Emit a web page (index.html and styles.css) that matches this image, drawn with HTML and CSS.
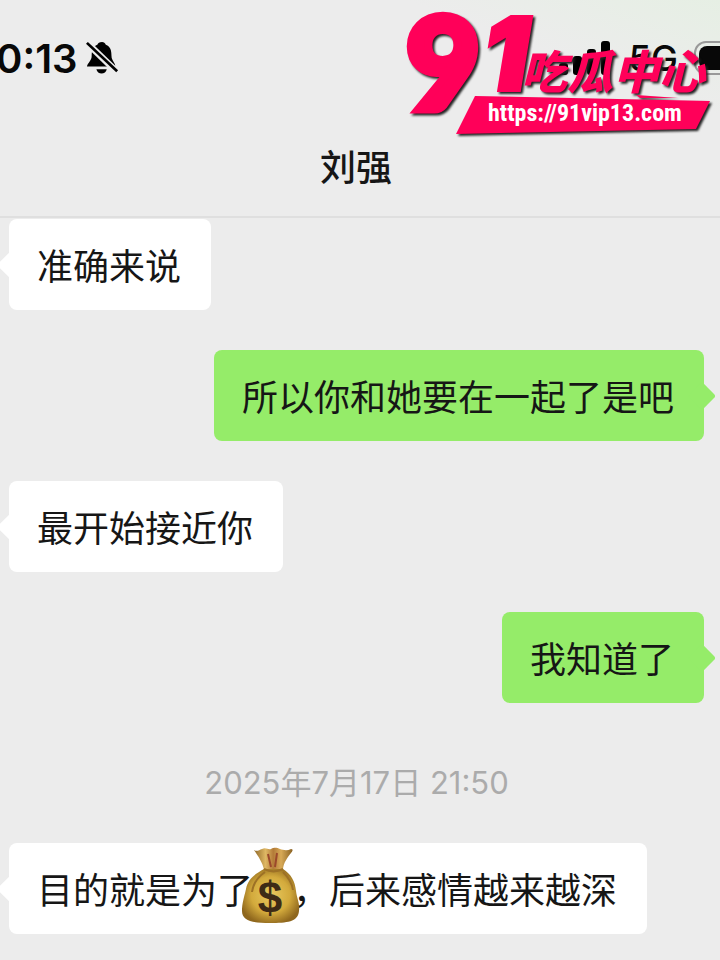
FILE: index.html
```
<!DOCTYPE html>
<html lang="zh-CN">
<head>
<meta charset="UTF-8">
<meta name="viewport" content="width=device-width, initial-scale=1">
<title>刘强</title>
<link rel="stylesheet" href="styles.css">
</head>
<body>
<header class="top">
<div class="status">
<span class="clock">0:13</span>
<svg class="bell" viewBox="0 0 36 36" aria-hidden="true">
  <path d="M17 1c-3 0-4 1-5 3-5 2-6 7-6 12 0 5-4 7-5 11h30c0-4-4-6-4-11 0-6-1-10-6-12-1-2-2-3-4-3z"/>
  <path d="M11 30h11c-1 6-10 6-11 0z"/>
  <path class="bell-gap" d="M0 1l34 33"/>
  <path d="M2 1l32 30-2 2L0 3z"/>
</svg>
<span class="network">
<svg class="signal" viewBox="0 0 52 34" aria-hidden="true">
  <rect x="0" y="22" width="9" height="12" rx="3"/>
  <rect x="14" y="15" width="9" height="19" rx="3"/>
  <rect x="28" y="8" width="9" height="26" rx="3"/>
  <rect x="42" y="0" width="9" height="34" rx="3"/>
</svg>
<span class="net-type">5G</span>
<span class="battery"><span class="level"></span></span>
</span>
</div>
<h1 class="title">刘强</h1>
</header>

<svg class="logo" viewBox="0 0 320 150" role="img" aria-label="91吃瓜中心">
  <g class="logo-shadow">
    <path d="M75 96L310 101 296 129 56 134z"/>
    <path d="M236 95l42 3-38 0z"/>
    <text class="nine" x="6" y="110">9</text>
    <text class="one" x="83" y="90">1</text>
    <text class="cn" x="121" y="89">吃瓜中心</text>
  </g>
  <text class="url" x="88" y="121">https://91vip13.com</text>
</svg>

<main class="chat">
<div class="msg left">准确来说</div>
<div class="msg right">所以你和她要在一起了是吧</div>
<div class="msg left">最开始接近你</div>
<div class="msg right">我知道了</div>
<time class="time" datetime="2025-07-17T21:50">2025年7月17日 21:50</time>
<div class="msg left">目的就是为了<span class="emoji"><svg viewBox="0 0 60 78" role="img" aria-label="钱袋">
  <defs>
    <radialGradient id="gold" cx="50%" cy="48%" r="56%">
      <stop offset="0" stop-color="#e8c95f"/>
      <stop offset="0.6" stop-color="#d3aa3c"/>
      <stop offset="1" stop-color="#8f671d"/>
    </radialGradient>
    <linearGradient id="neck">
      <stop offset="0" stop-color="#8f6828"/>
      <stop offset="0.3" stop-color="#dfb864"/>
      <stop offset="0.5" stop-color="#b37b38"/>
      <stop offset="0.7" stop-color="#d8aa57"/>
      <stop offset="1" stop-color="#8a6224"/>
    </linearGradient>
  </defs>
  <path fill="url(#neck)" d="M13 3c3 2 5 0 8-1 4-2 6 1 9 0 4-2 6-1 9 0s7 2 11 0c3 0 1 3 0 4-3 4-8 10-8 17H23C22 16 17 9 13 3z"/>
  <path fill="url(#gold)" d="M23 22h19c8 5 12 12 13 22 1 8 4 12 3 20-1 11-12 12-29 12S1 74 1 64c0-8 2-13 4-22 2-10 9-15 18-20z"/>
  <path fill="none" stroke="#9d7126" stroke-width="2" d="M23 22c6 3 13 3 19 0M24 25c-7 5-12 12-13 20M42 25c5 5 9 10 10 18"/>
  <path fill="none" stroke="#9b482b" stroke-width="2" d="M27 7l3 13M36 6l-2 14"/>
  <text class="dollar" x="29" y="66">$</text>
</svg></span>，后来感情越来越深</div>
</main>
</body>
</html>
```
FILE: styles.css
```
*{box-sizing:border-box}
body{margin:0;background:#ececec;color:#161616;font-family:"Noto Sans CJK SC",sans-serif;overflow-x:hidden;position:relative}
.top{border-bottom:2px solid #dfdfdf;background:linear-gradient(200deg,#e6efe4,#ececec 24%)}
.status{display:flex;align-items:center;height:116px;overflow:hidden;color:#080808;font-family:Inter,sans-serif}
.clock{margin-left:-4px;font-size:40px;font-weight:600}
.bell{width:34px;height:36px;margin-left:8px;flex:none}
.bell-gap{stroke:#ececec;stroke-width:7}
.network{display:flex;align-items:center;margin:0 -32px 0 auto}
.signal{width:52px;height:34px}
.net-type{margin-left:18px;font-size:36px;font-weight:500}
.battery{width:58px;height:34px;margin-left:16px;padding:3px;border:2px solid #999;border-radius:12px}
.level{display:block;height:100%;border-radius:8px;background:#080808}
.title{margin:0;padding:24px 8px 26px 0;font-size:36px;line-height:50px;font-weight:500;text-align:center}

.logo{position:absolute;top:0;right:0;width:320px;height:150px;fill:#ff0059}
.logo-shadow{filter:drop-shadow(2px 2px 1px #222)}
.nine,.one{font-weight:900;stroke:#ff0059}
.nine{font-family:Lato,sans-serif;font-size:128px;stroke-width:8px}
.one{font-family:Inter,sans-serif;font-size:100px;font-style:italic;stroke-width:4px}
.cn{font-family:"Noto Sans CJK SC",sans-serif;font-size:46px;font-weight:900;font-style:italic}
.url{font-family:"Liberation Sans Narrow","Roboto Condensed",sans-serif;font-size:24px;font-weight:700;fill:#fff}

.chat{display:flex;flex-direction:column;gap:40px;padding:1px 16px 24px 9px}
.msg{position:relative;padding:20px 30px 20px 28px;border-radius:8px;font-size:36px;line-height:51px}
.msg:before{content:"";position:absolute;top:50%;width:20px;height:20px;border-radius:3px;background:inherit;transform:translateY(-50%) rotate(45deg)}
.left{align-self:flex-start;background:#fff}
.left:before{left:-8px}
.right{align-self:flex-end;background:#95ec69}
.right:before{right:-8px}
.time{align-self:center;margin:20px 0 0;color:#ababab;font-family:Inter,"Noto Sans CJK SC",sans-serif;font-size:31px;line-height:40px}
.emoji{display:inline-block;position:relative;width:40px;height:36px;vertical-align:middle}
.emoji svg{position:absolute;left:-12px;top:-29px;width:60px;height:78px}
.dollar{font-family:"Liberation Sans",sans-serif;font-size:44px;font-weight:700;fill:#3e2b16;text-anchor:middle}
```
